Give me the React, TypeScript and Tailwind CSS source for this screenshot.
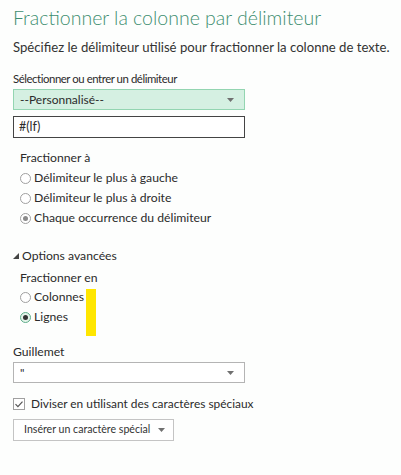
import React from "react";

function Radio({ checked, focused, label }: { checked?: boolean; focused?: boolean; label: string }) {
  return (
    <div className="flex h-[20px] items-center gap-[3px]">
      <span
        className={`flex h-[11px] w-[11px] items-center justify-center rounded-full border ${
          focused ? "border-[#5fae8a] bg-[#e4f3ea]" : "border-[#a0a0a0] bg-white"
        }`}
      >
        {checked ? <span className={`h-[5px] w-[5px] rounded-full ${focused ? "bg-[#333]" : "bg-[#8a8a8a]"}`} /> : null}
      </span>
      <span>{label}</span>
    </div>
  );
}

function Caret() {
  return (
    <svg width="7" height="4" viewBox="0 0 7 4" className="shrink-0">
      <path d="M0 0h7L3.5 4z" fill="#707070" />
    </svg>
  );
}

export default function App() {
  return (
    <div
      className="relative h-[475px] w-[401px] overflow-hidden bg-[#fdfefd] px-[13px] text-[12.2px] text-[#2b2b2b]"
      style={{ fontFamily: 'Lato, "Open Sans", sans-serif' }}
    >
      <h1 className="pt-[3px] text-[19.5px] font-light leading-[30px] text-[#3d8e70]">
        Fractionner la colonne par délimiteur
      </h1>
      <p className="mt-[4px] whitespace-nowrap text-[13.15px] leading-[20px] text-[#333]">
        Spécifiez le délimiteur utilisé pour fractionner la colonne de texte.
      </p>

      <div className="mt-[14px] text-[11.4px] leading-[16px] tracking-[-0.45px]">Sélectionner ou entrer un délimiteur</div>
      <div className="mt-[2px] flex h-[21px] w-[232px] items-center justify-between border border-[#93d5b1] bg-[#d5f0e2] pl-[6px] pr-[10px] text-[12px]">
        <span>--Personnalisé--</span>
        <Caret />
      </div>
      <div className="mt-[6px] flex h-[22px] w-[232px] items-center border-[1.5px] border-[#444] bg-white pl-[5px] text-[12.5px]">
        #(lf)
      </div>

      <div className="mt-[11px] pl-[7px]">
        <div className="leading-[18px]">Fractionner à</div>
        <div className="mt-[1px]">
          <Radio label="Délimiteur le plus à gauche" />
          <Radio label="Délimiteur le plus à droite" />
          <Radio checked label="Chaque occurrence du délimiteur" />
        </div>
      </div>

      <div className="mt-[19px] flex items-center gap-[3px] leading-[18px]">
        <svg width="6" height="6" viewBox="0 0 6 6">
          <path d="M6 0v6H0z" fill="#444" />
        </svg>
        <span>Options avancées</span>
      </div>
      <div className="mt-[4px] pl-[7px]">
        <div className="leading-[18px]">Fractionner en</div>
        <div className="relative">
          <Radio label="Colonnes" />
          <Radio checked focused label="Lignes" />
          <div className="absolute left-[66px] top-[2px] h-[47px] w-[10px] bg-[#ffe600]" />
        </div>
      </div>

      <div className="mt-[16px] leading-[18px]">Guillemet</div>
      <div className="mt-[1px] flex h-[21px] w-[232px] items-center justify-between border border-[#b4b4b4] bg-white pl-[6px] pr-[10px] text-[12px]">
        <span>"</span>
        <Caret />
      </div>

      <div className="mt-[12px] flex items-center gap-[6px] text-[11.9px] leading-[18px]">
        <span className="flex h-[12px] w-[12px] items-center justify-center border border-[#a0a0a0] bg-white">
          <svg width="10" height="10" viewBox="0 0 10 10">
            <path d="M1.5 5.2l2.4 2.4 4.6-5" stroke="#555" strokeWidth="1.2" fill="none" />
          </svg>
        </span>
        <span>Diviser en utilisant des caractères spéciaux</span>
      </div>
      <button
        type="button"
        className="mt-[6px] flex h-[22px] items-center gap-[8px] border border-[#c4c4c4] bg-white pl-[10px] pr-[8px] text-[10.6px] text-[#333]"
      >
        <span>Insérer un caractère spécial</span>
        <Caret />
      </button>
    </div>
  );
}
